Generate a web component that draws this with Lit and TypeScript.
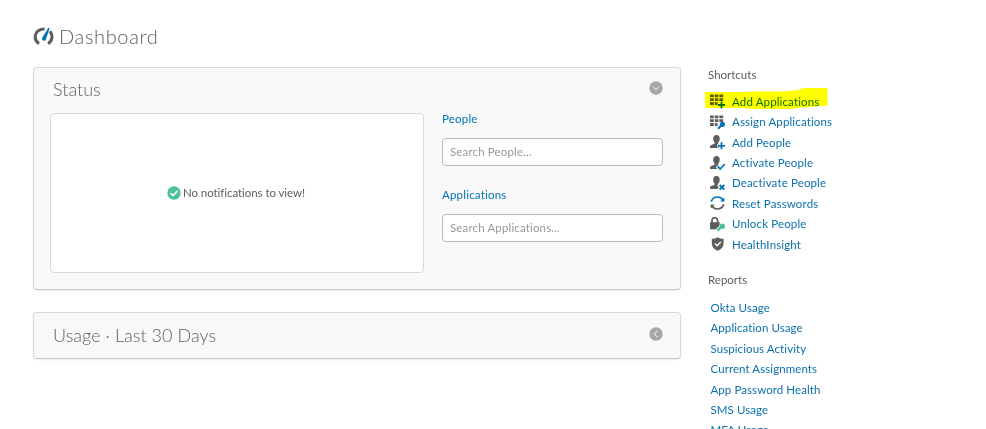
import { LitElement, html, css, svg } from "lit";
import { customElement } from "lit/decorators.js";

const grid = svg`<path fill="#5e5e5e" d="M0 .5h3.800v2.800H0zM4.800.5h3.600v2.800H4.800zM9.400.5h3.800v2.800H9.400zM0 4.300h3.800v2.800H0zM4.800 4.300h3.600v2.800H4.800zM9.400 4.300h3.800v2.800H9.400zM0 8.100h3.800v2.800H0zM4.800 8.100h2.800v2.800H4.800z"/>`;
const person = svg`<path fill="#5e5e5e" d="M6.500 0C8.700 0 9.800 1.500 9.700 3.600c0 1.900-.6 3.100-1.400 4v1.600l1 .6V13H0v-1.400c0-1.300 1-1.500 4.600-2.900V7.500C3.700 6.700 3.200 5.400 3.200 3.600 3.200 1.500 4.300 0 6.500 0z"/>`;
const plus = svg`<path stroke="#fff" stroke-width="3.200" d="M11.500 6.500v8.500M7.300 10.800h7.700"/><path stroke="#0074b3" stroke-width="1.800" d="M11.500 7.300v7M8 10.800h7"/>`;

const icons: Record<string, unknown> = {
  addApp: svg`${grid}<path stroke="#0074b3" stroke-width="1.800" d="M11.500 7.500v7M8 11h7"/>`,
  assignApp: svg`${grid}<path stroke="#0074b3" stroke-width="2.200" d="M8 13.800l3.500-3.500"/><circle cx="12.400" cy="9.300" r="2.600" fill="#0074b3"/>`,
  addPerson: svg`${person}${plus}`,
  activate: svg`${person}<path fill="none" stroke="#fff" stroke-width="3.600" d="M7 10l3 3 5-5.500"/><path fill="none" stroke="#0074b3" stroke-width="1.700" d="M7.600 10.400l2.600 2.700 4.500-5"/>`,
  deactivate: svg`${person}<path stroke="#fff" stroke-width="4" d="M8.500 8l6 6M14.500 8.500L9 14"/><path stroke="#0074b3" stroke-width="2" d="M9.600 8.900l4.700 4.700M14.300 8.900l-4.700 4.700"/>`,
  reset: svg`<path fill="none" stroke="#0074b3" stroke-width="1.700" d="M1.200 5.600C2.200 2.800 4.600 1 7.500 1c2.400 0 4.300 1.100 5.500 3"/><path fill="#0074b3" d="M14.400 1.500v4.100h-4.200z"/><path fill="none" stroke="#5e5e5e" stroke-width="1.700" d="M13.800 8.400c-1 2.800-3.400 4.600-6.300 4.600-2.400 0-4.300-1.100-5.500-3"/><path fill="#5e5e5e" d="M.6 12.500V8.400h4.200z"/>`,
  unlock: svg`<path fill="none" stroke="#5e5e5e" stroke-width="1.700" d="M2 7V3.600C2 1.600 3 .7 4.800.7s2.800.9 2.800 2.900V7"/><path fill="#5e5e5e" d="M0 5.200h9.600v7.100H0z"/><path stroke="#fff" stroke-width="4" d="M7.600 13.500l4-4"/><path stroke="#4cbf9c" stroke-width="2.400" d="M7.600 13.600l4-4"/><circle cx="12.300" cy="9.300" r="2.700" fill="#4cbf9c"/>`,
  shield: svg`<path fill="#5e5e5e" d="M7.700.2c1.800 1.200 3.600 1.500 5.900 1.600v4.600c0 3.500-2 5.500-5.900 7.300-3.900-1.800-5.900-3.800-5.900-7.300V1.800C4.100 1.700 5.900 1.400 7.700.2z"/><path fill="none" stroke="#fff" stroke-width="1.400" d="M4.900 6.500l2.200 2.200 3.700-3.800"/>`,
};

const shortcuts = [
  ["addApp", "Add Applications"],
  ["assignApp", "Assign Applications"],
  ["addPerson", "Add People"],
  ["activate", "Activate People"],
  ["deactivate", "Deactivate People"],
  ["reset", "Reset Passwords"],
  ["unlock", "Unlock People"],
  ["shield", "HealthInsight"],
];

const reports = [
  "Okta Usage",
  "Application Usage",
  "Suspicious Activity",
  "Current Assignments",
  "App Password Health",
  "SMS Usage",
  "MFA Usage",
];

@customElement("app-root")
export class AppRoot extends LitElement {
  static styles = css`
    :host {
      display: block;
      height: 429px;
      overflow: hidden;
      background: #fff;
      color: #5e5e5e;
      font: 11.5px/16px Lato, "Open Sans", sans-serif;
    }
    * { box-sizing: border-box; }
    svg { display: block; flex: none; }
    .page { display: flex; gap: 27px; padding: 0 0 0 33px; }
    main { width: 648px; }
    h1, h2, h3, ul { margin: 0; padding: 0; font-weight: 300; }
    h1 {
      display: flex;
      align-items: center;
      gap: 5px;
      height: 67px;
      padding-top: 5px;
      font-size: 20px;
      letter-spacing: 0.65px;
    }
    h1 span { margin-top: -1px; }
    .panel {
      border: 1px solid #d8d8d8;
      border-bottom-color: #c9c9c9;
      border-radius: 4px;
      background: #f9f9f9;
      box-shadow: 0 1px 2px rgba(0, 0, 0, 0.08);
    }
    .status { height: 223px; margin-bottom: 22px; }
    .usage { height: 47px; }
    .head {
      display: flex;
      justify-content: space-between;
      align-items: center;
      height: 45px;
      padding: 0 17px 3px 19px;
    }
    h2 { font-size: 18px; line-height: 24px; }
    .status svg.toggle { margin-top: -2px; }
    .usage h2 { letter-spacing: 0.04px; padding-top: 1px; }
    .body { display: flex; gap: 18px; padding: 0 17px 0 16px; }
    .notice {
      display: flex;
      align-items: center;
      justify-content: center;
      gap: 2px;
      width: 374px;
      height: 160px;
      padding-right: 2px;
      border: 1px solid #d8d8d8;
      border-radius: 4px;
      background: #fff;
    }
    .notice span { letter-spacing: -0.06px; }
    .search { width: 221px; }
    h3 { font-size: 11.5px; line-height: 16px; font-weight: 400; }
    .search h3 { color: #0074b3; margin: -2px 0 11px; letter-spacing: 0.2px; }
    .field {
      display: flex;
      align-items: center;
      height: 28px;
      padding: 0 7px;
      margin-bottom: 23px;
      border: 1px solid #bbb;
      border-radius: 4px;
      background: #fff;
      color: #999;
      letter-spacing: 0.15px;
    }
    aside { padding-top: 67px; }
    ul { list-style: none; font-weight: 400; }
    li { display: flex; align-items: center; gap: 7px; height: 20.430px; letter-spacing: 0.14px; }
    li, a { color: #0c70ae; text-decoration: none; white-space: nowrap; }
    .shortcuts { position: relative; padding: 8.600px 0 0 2px; margin-bottom: 17.400px; }
    .reports { padding: 9.400px 0 0 2.500px; }
    .reports li { letter-spacing: 0.08px; }
    .marker {
      position: absolute;
      left: -3px;
      top: 5px;
      mix-blend-mode: multiply;
    }
  `;

  render() {
    return html`
      <div class="page">
        <main>
          <h1>
            <svg width="21" height="20" viewBox="0 0 21 20" fill="none">
              <path stroke="#5e5e5e" stroke-width="3" d="M6 17.700C-.5 13 1.500 3 11.600 3M16.900 5.200c3.400 4 2.600 9.300-1.700 12.500" />
              <path fill="#0074b3" d="M15.400 1.700l1.200.5-3.700 11.200c-.8 2.400-5 1.200-3.700-1.600z" />
            </svg>
            <span>Dashboard</span>
          </h1>
          <section class="panel status">
            <div class="head">
              <h2>Status</h2>
              <svg class="toggle" width="14" height="14" viewBox="0 0 14 14"><circle cx="7" cy="7" r="6.700" fill="#a7a7a7" /><path fill="none" stroke="#f9f9f9" d="M3.800 5.600L7 8.600l3.200-3" /></svg>
            </div>
            <div class="body">
              <div class="notice">
                <svg width="14" height="14" viewBox="0 0 14 14"><circle cx="7" cy="7" r="6.700" fill="#4cbf9c" /><path fill="none" stroke="#fff" stroke-width="1.600" d="M3.600 7.200l2.400 2.300 4.500-4.600" /></svg>
                <span>No notifications to view!</span>
              </div>
              <div class="search">
                <h3>People</h3>
                <div class="field"><span>Search People...</span></div>
                <h3>Applications</h3>
                <div class="field"><span>Search Applications...</span></div>
              </div>
            </div>
          </section>
          <section class="panel usage">
            <div class="head">
              <h2>Usage · Last 30 Days</h2>
              <svg class="toggle" width="14" height="14" viewBox="0 0 14 14"><circle cx="7" cy="7" r="6.700" fill="#a7a7a7" /><path fill="none" stroke="#f9f9f9" d="M8.400 3.800L5.400 7l3 3.200" /></svg>
            </div>
          </section>
        </main>
        <aside>
          <h3>Shortcuts</h3>
          <ul class="shortcuts">
            ${shortcuts.map(([icon, label]) => html`<li>
              <svg width="15" height="15" viewBox="0 0 15 15">${icons[icon]}</svg><a>${label}</a>
            </li>`)}
            <svg class="marker" width="124" height="23" viewBox="0 0 124 23">
              <path fill="#ff0" d="M0 4h40l2-.500h34l17-1.500 6-2 9-1h13q1.500 0 1.500 2v16.500l-30 2.500-6 1H45l-5-1H1L0 18z" />
            </svg>
          </ul>
          <h3>Reports</h3>
          <ul class="reports">
            ${reports.map((label) => html`<li><a>${label}</a></li>`)}
          </ul>
        </aside>
      </div>
    `;
  }
}
